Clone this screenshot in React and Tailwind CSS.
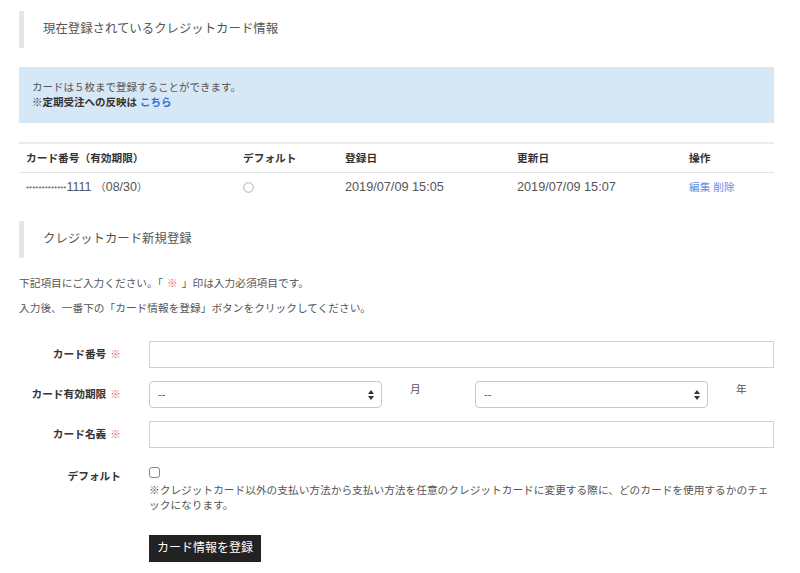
import React from 'react';

const font = { fontFamily: '"Liberation Sans", "Noto Sans CJK JP", sans-serif' };

const SectionTitle = ({ children, className = '' }) => (
  <div className={`flex h-[37px] items-center border-l-[5px] border-[#e6e6e6] pl-[19px] text-[12.4px] text-[#555] ${className}`}>
    {children}
  </div>
);

const Req = () => <span className="ml-[4px] text-[#e06a6a]">※</span>;

const SelectBox = () => (
  <div className="relative h-[27px] w-[233px] rounded-[4px] border border-[#c8c8c8] bg-white">
    <span className="absolute left-[8px] top-[5px] text-[11px] text-[#555]">--</span>
    <svg className="absolute right-[7px] top-[8px]" width="6" height="10" viewBox="0 0 6 10">
      <path d="M3 0 L6 4 L0 4 Z" fill="#333" />
      <path d="M3 10 L6 6 L0 6 Z" fill="#333" />
    </svg>
  </div>
);

export default function App() {
  const cols = 'grid grid-cols-[217px_102px_172px_172px_1fr]';
  return (
    <div style={font} className="w-[800px] bg-white pb-[12px] pl-[19px] pr-[26px] pt-[11px] text-[10.7px] leading-[15px] text-[#555]">
      <SectionTitle>現在登録されているクレジットカード情報</SectionTitle>

      {/* notice */}
      <div className="mt-[19px] h-[56px] bg-[#d6e7f5] px-[13px] py-[13px] text-[10.5px]">
        <p>カードは５枚まで登録することができます。</p>
        <p className="font-bold text-[#333]">
          ※定期受注への反映は <a className="text-[#2f6fd8]">こちら</a>
        </p>
      </div>

      {/* table */}
      <div className="mt-[19px] border-t-2 border-[#ebebeb]">
        <div className={`${cols} h-[29px] items-center border-b border-[#e2e2e2] font-bold text-[#333]`}>
          <div className="pl-[7px]">カード番号（有効期限）</div>
          <div className="pl-[7px]">デフォルト</div>
          <div className="pl-[7px]">登録日</div>
          <div className="pl-[7px]">更新日</div>
          <div className="pl-[7px]">操作</div>
        </div>
        <div className={`${cols} h-[29px] items-center`}>
          <div className="pl-[7px]">
            <span className="text-[8px]">*************</span>
            <span className="text-[12.5px]">1111 </span>（<span className="text-[12.5px]">08/30</span>）
          </div>
          <div className="flex pl-[7px]">
            <svg width="11" height="11" viewBox="0 0 11 11">
              <circle cx="5.5" cy="5.5" r="4.8" fill="none" stroke="#a8a8a8" strokeWidth="0.9" />
            </svg>
          </div>
          <div className="pl-[7px] text-[12.7px]">2019/07/09 15:05</div>
          <div className="pl-[7px] text-[12.7px]">2019/07/09 15:07</div>
          <div className="pl-[7px] text-[#5b8fe6]">編集 削除</div>
        </div>
      </div>

      <SectionTitle className="mt-[19px]">クレジットカード新規登録</SectionTitle>

      <p className="mt-[18px]">
        下記項目にご入力ください。「<span className="mx-[4px] text-[#e06a6a]">※</span>」印は入力必須項目です。
      </p>
      <p className="mt-[10px]">入力後、一番下の「カード情報を登録」ボタンをクリックしてください。</p>

      {/* form */}
      <div className="mt-[25px] grid grid-cols-[102px_1fr] gap-x-[28px] gap-y-[13px]">
        <div className="flex items-center justify-end font-bold text-[#333]">
          カード番号<Req />
        </div>
        <div className="h-[27px] border border-[#cfcfcf] bg-white" />

        <div className="flex items-center justify-end font-bold text-[#333]">
          カード有効期限<Req />
        </div>
        <div className="flex">
          <div className="flex w-[326px] items-start">
            <SelectBox />
            <span className="ml-[28px] pt-[1px]">月</span>
          </div>
          <div className="flex items-start">
            <SelectBox />
            <span className="ml-[28px] pt-[1px]">年</span>
          </div>
        </div>

        <div className="flex items-center justify-end font-bold text-[#333]">
          カード名義<Req />
        </div>
        <div className="h-[27px] border border-[#cfcfcf] bg-white" />

        <div className="pt-[8px] text-right font-bold text-[#333]">デフォルト</div>
        <div className="pt-[2px]">
          <div className="h-[20px] pt-[4px]">
            <span className="block h-[11px] w-[11px] rounded-[3px] border border-[#888] bg-white" />
          </div>
          <p>
            ※クレジットカード以外の支払い方法から支払い方法を任意のクレジットカードに変更する際に、どのカードを使用するかのチェックになります。
          </p>
          <button className="mt-[22px] h-[27px] bg-[#222] px-[8px] text-[12px] text-white">
            カード情報を登録
          </button>
        </div>
      </div>
    </div>
  );
}
